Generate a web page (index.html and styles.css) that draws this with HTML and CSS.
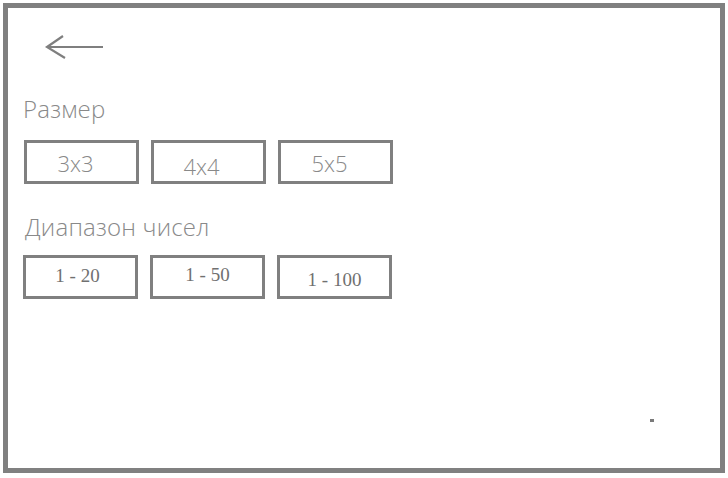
FILE: index.html
```html
<!DOCTYPE html>
<html lang="ru">

<head>
    <meta charset="UTF-8">
    <meta name="viewport" content="width=device-width, initial-scale=1.0">
    <title>Настройки</title>
    <link rel="stylesheet" href="styles.css">
</head>

<body>
    <div class="frame">
        <div class="top-bar">
            <svg class="back-arrow" width="62" height="28" viewBox="0 0 62 28">
                <path d="M3 14 H59 M19 3 L3 14 L21 25" fill="none" stroke="#7f7f7f" stroke-width="2.2" />
            </svg>
        </div>

        <div class="section-title size-title">Размер</div>
        <div class="options">
            <div class="option light">3x3</div>
            <div class="option light low">4x4</div>
            <div class="option light">5x5</div>
        </div>

        <div class="section-title range-title">Диапазон чисел</div>
        <div class="options range">
            <div class="option serif">1 - 20</div>
            <div class="option serif mid">1 - 50</div>
            <div class="option serif low">1 - 100</div>
        </div>

        <div class="dot"></div>
    </div>
</body>

</html>
```

FILE: styles.css
```css
body {
    margin: 0;
    padding: 0;
    background-color: #fff;
    font-family: "Open Sans", "Liberation Sans", sans-serif;
}

.frame {
    position: relative;
    box-sizing: border-box;
    width: 722px;
    height: 470px;
    margin: 3px;
    border: 5px solid #808080;
    padding: 25px 0 0 16px;
}

.top-bar {
    display: flex;
    padding-left: 20px;
}

.back-arrow {
    display: block;
}

.section-title {
    font-size: 24px;
    font-weight: 300;
    line-height: 30px;
    color: #898989;
    letter-spacing: 0.2px;
}

.size-title {
    margin: 33px 0 0 -1px;
}

.range-title {
    margin: 28px 0 0 1px;
}

.options {
    display: flex;
    gap: 12px;
    margin-top: 16px;
}

.options.range {
    margin-top: 13px;
    margin-left: -1px;
}

.option {
    box-sizing: border-box;
    width: 115px;
    height: 44px;
    border: 3px solid #808080;
    text-align: center;
    color: #898989;
}

.option.light {
    font-size: 22px;
    font-weight: 300;
    line-height: 30px;
    padding: 5px 12px 0 0;
}

.option.light.low {
    padding-top: 8px;
    padding-right: 14px;
}

.option.serif {
    font-family: "Liberation Serif", "Times New Roman", serif;
    font-size: 19px;
    line-height: 24px;
    padding: 6px 6px 0 0;
    color: #707070;
}

.option.serif.mid {
    padding-right: 0;
    padding-top: 5px;
}

.option.serif.low {
    padding: 10px 0 0 0;
}

.dot {
    position: absolute;
    left: 642px;
    top: 411px;
    width: 4px;
    height: 3px;
    background-color: #7a7a7a;
}
```
